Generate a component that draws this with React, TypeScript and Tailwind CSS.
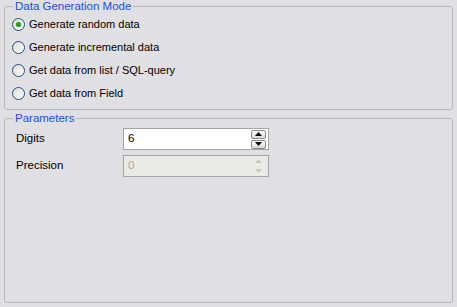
import { useState } from "react";

const modes = [
  "Generate random data",
  "Generate incremental data",
  "Get data from list / SQL-query",
  "Get data from Field",
];

function Radio({ checked }: { checked: boolean }) {
  return (
    <span className="grid size-[13px] place-items-center rounded-full border border-[#1c5180] bg-gradient-to-br from-[#dcdcd4] to-white">
      {checked ? <span className="size-[5px] rounded-full bg-[#21a121] shadow-[0_0_1px_#5fd35f]" /> : null}
    </span>
  );
}

function SpinButton({ dir, disabled }: { dir: "up" | "down"; disabled?: boolean }) {
  return (
    <span
      className={`grid h-[9px] w-[15px] place-items-center rounded-[2px] border ${
        disabled ? "border-transparent bg-[#ebeae4]" : "border-[#8a8a8a] bg-gradient-to-b from-white to-[#d8d8d8]"
      }`}
    >
      <svg width="7" height="4" viewBox="0 0 7 4">
        <path
          d={dir === "up" ? "M3.5 0 L7 4 L0 4 Z" : "M0 0 L7 0 L3.5 4 Z"}
          fill={disabled ? "#c9c9c4" : "#000"}
        />
      </svg>
    </span>
  );
}

function SpinEdit({ value, disabled }: { value: string; disabled?: boolean }) {
  return (
    <div
      className={`flex h-[22px] w-[146px] items-center border border-[#a5a5a5] pl-[4px] pr-[2px] ${
        disabled ? "bg-[#ebeae4] text-[#a8a8a0]" : "bg-white text-black"
      }`}
    >
      <span className="flex-1">{value}</span>
      <span className="flex flex-col gap-[1px]">
        <SpinButton dir="up" disabled={disabled} />
        <SpinButton dir="down" disabled={disabled} />
      </span>
    </div>
  );
}

export default function App() {
  const [mode, setMode] = useState(0);

  return (
    <div className="flex h-[307px] w-[457px] flex-col bg-[#e0dfe3] px-[4px] pb-[4px] font-['Liberation_Sans',Arial,sans-serif] text-[11.5px] text-black">
      <fieldset className="h-[110px] w-[449px] rounded-[3px] border border-[#b9b5bd] pl-[7px] pb-[2px]">
        <legend className="ml-px px-[2px] text-[11.5px] leading-[13px] text-[#1a4fd6]">Data Generation Mode</legend>
        {modes.map((label, index) => (
          <label key={label} className="flex h-[23px] items-center gap-[4px]" onClick={() => setMode(index)}>
            <Radio checked={mode === index} />
            <span className="text-[11px]">{label}</span>
          </label>
        ))}
      </fieldset>

      <fieldset className="mt-[2px] w-[449px] flex-1 rounded-[3px] border border-[#b9b5bd] pl-[10px] pt-[3px]">
        <legend className="-ml-[2px] px-[2px] text-[11.5px] leading-[13px] text-[#1a4fd6]">Parameters</legend>
        <div className="flex flex-col gap-[5px]">
          <div className="flex items-center">
            <span className="w-[108px] pl-px">Digits</span>
            <SpinEdit value="6" />
          </div>
          <div className="flex items-center">
            <span className="w-[108px] pl-px">Precision</span>
            <SpinEdit value="0" disabled />
          </div>
        </div>
      </fieldset>
    </div>
  );
}
